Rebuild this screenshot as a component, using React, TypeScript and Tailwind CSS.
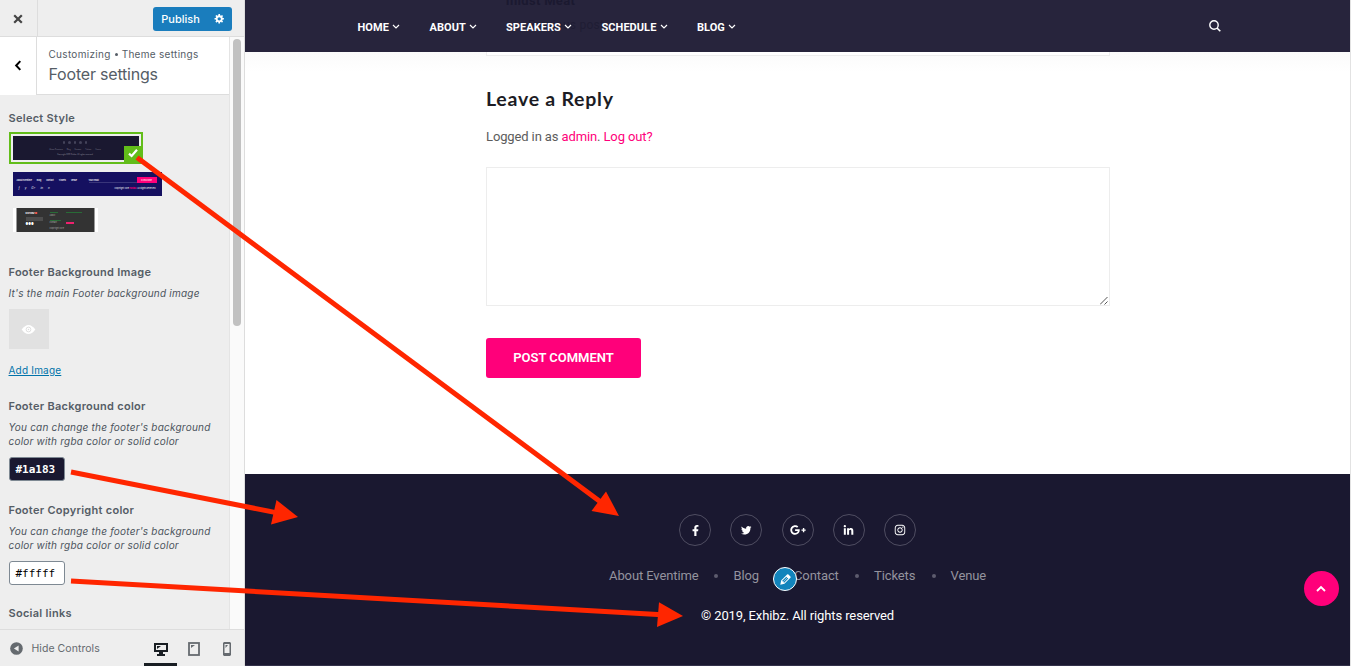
import React from "react";
import { FaFacebookF, FaTwitter, FaGooglePlusG, FaLinkedinIn, FaInstagram } from "react-icons/fa";

function Heading({ children, className = "" }: { children: React.ReactNode; className?: string }) {
  return (
    <h3 className={`h-5 text-[11px] leading-5 font-semibold tracking-[0.28px] whitespace-nowrap text-[#555d66] ${className}`}>
      {children}
    </h3>
  );
}

function Description({ children }: { children: React.ReactNode }) {
  return (
    <p className="mt-1 text-[10px] leading-[14px] tracking-[0.22px] whitespace-nowrap text-[#4b535c] italic">{children}</p>
  );
}

function StyleDark() {
  return (
    <div className="relative mt-1 flex h-8 w-[134px] border-2 border-[#62bd19] p-0.5">
      <div className="flex h-6 w-[126px] flex-col items-center bg-[#1a1830] pt-[5px] pr-[1px]">
        <div className="flex gap-[3px]">
          {[0, 1, 2, 3, 4].map((i) => (
            <span key={i} className="size-[2.5px] rounded-full bg-[#44435a]" />
          ))}
        </div>
        <div className="mt-[3px] flex h-[4px] items-center gap-[4px] text-[1.8px] leading-[4px] whitespace-nowrap text-[#77768a]">
          <span>About Eventime</span><span>Blog</span><span>Contact</span><span>Tickets</span><span>Venue</span>
        </div>
        <div className="mt-px text-[1.8px] leading-[4px] whitespace-nowrap text-[#8b8a99]">Copyright 2019 Exhibz. All rights reserved</div>
      </div>
      <div className="absolute -right-0.5 -bottom-px flex h-[17px] w-[19px] items-center justify-center bg-[#62bd19]">
        <svg viewBox="0 0 10 10" className="mt-[-3px] size-[10px]">
          <path d="M1 5.6 3.6 8 9 1.7" fill="none" stroke="#fff" strokeWidth="2.2" />
        </svg>
      </div>
    </div>
  );
}

function StyleNavy() {
  return (
    <div className="mt-2 ml-1 flex h-6 w-[149px] flex-col bg-[#151060] px-[4px] pt-[5px] text-[2px] leading-[6px] whitespace-nowrap text-white">
      <div className="flex h-[6px] items-center">
        <div className="flex w-[72px] gap-[5px] font-semibold"><span>About Eventime</span><span>Blog</span><span>Contact</span><span>Tickets</span><span>Venue</span></div>
        <div className="h-[6px] w-[48px] border-b border-[#39357a] font-semibold">Your Email</div>
        <div className="h-[6px] w-[20px] bg-[#ff007a] text-center">SUBSCRIBE</div>
      </div>
      <div className="mt-[2px] flex h-[6px] justify-between">
        <span className="flex gap-[5px] pl-0.5 text-[3px]"><i>f</i><i>y</i><i>G+</i><i>in</i><i>o</i></span>
        <span className="pr-0.5">Copyright 2019 <b className="text-[#ff007a]">Exhibz</b>. All Rights Reserved</span>
      </div>
    </div>
  );
}

function StyleGray() {
  return (
    <div className="mt-3 ml-1 flex h-6 w-[85px] bg-white px-[3px]">
      <div className="flex flex-1 gap-[6px] border-x border-[#999] bg-[#333] px-[9px] pt-[4px] text-[2px] leading-[3px] text-[#aaa]">
        <div className="w-[18px]">
          <div className="text-[2.5px] leading-[3px] font-bold text-white">EXHIBZ<span className="text-[#f75b56]">■</span></div>
          <div className="mt-[2px] h-[4px] w-[17px] bg-[#4d4d4d]" />
          <div className="mt-[2px] text-[3px] text-white">●●●</div>
        </div>
        <div className="w-[10px]">
          <div className="h-px w-[8px] bg-[#286b36]" />
          <div className="mt-px">About</div>
          <div className="mt-[3px] h-px w-[11px] bg-[#286b36]" />
          <div>Contact</div>
          <div className="mt-[3px] whitespace-nowrap">Copyright 2019</div>
        </div>
        <div>
          <div className="h-px w-[16px] bg-[#286b36]" />
          <div className="mt-[9px] h-[2px] w-[8px] bg-[#ef216e]" />
        </div>
      </div>
    </div>
  );
}

function Sidebar() {
  return (
    <aside className="flex h-full w-[245px] shrink-0 flex-col border-r border-[#ddd] bg-[#eee] font-['Inter','Liberation_Sans',sans-serif]">
      <div className="flex h-[37px] shrink-0 items-center border-b border-[#ddd]">
        <div className="flex h-full w-[38px] items-center justify-center border-r border-[#ddd] pr-px">
          <svg viewBox="0 0 10 10" className="mt-[2px] size-[10px]"><path d="M1.2 1.2 8.8 8.8M8.8 1.2 1.2 8.8" stroke="#444" strokeWidth="2.2" /></svg>
        </div>
        <div className="mt-px ml-[115px] flex h-6 w-[79px] items-center rounded-[3px] bg-[#1a7dbd] text-white">
          <span className="w-[55px] pt-px text-center text-[11px] font-medium">Publish</span>
          <svg viewBox="0 0 20 20" className="mb-px ml-[6px] size-[11px]" fill="currentColor">
            <path d="M18 12h-2.18c-.17.7-.44 1.35-.81 1.93l1.54 1.54-2.1 2.1-1.54-1.54c-.58.36-1.23.63-1.91.79V19H8v-2.18c-.68-.16-1.33-.43-1.91-.79l-1.54 1.54-2.12-2.12 1.54-1.54c-.36-.58-.63-1.23-.79-1.91H1V9.03h2.17c.16-.7.44-1.35.8-1.94L2.43 5.55l2.1-2.1 1.54 1.54c.58-.37 1.24-.64 1.93-.81V2h3v2.18c.68.16 1.33.43 1.91.79l1.54-1.54 2.12 2.12-1.54 1.54c.36.59.64 1.24.8 1.94H18V12zm-8.5 1.5c1.66 0 3-1.34 3-3s-1.34-3-3-3-3 1.34-3 3 1.34 3 3 3z" />
          </svg>
        </div>
      </div>
      <div className="flex h-[592px] shrink-0">
        <div className="w-[229px] overflow-hidden">
          <div className="flex h-[58px] border-b border-[#ddd] bg-white">
            <div className="-mb-px flex w-[37px] shrink-0 items-center justify-center border-r border-[#ddd] bg-white pr-px">
              <svg viewBox="0 0 8 12" className="mb-[2px] h-[11px] w-[8px]"><path d="M6.5 1.2 2 6l4.5 4.8" fill="none" stroke="#000" strokeWidth="2.2" /></svg>
            </div>
            <div className="pt-[9px] pl-[11.500px] whitespace-nowrap text-[#555d66]">
              <div className="flex h-4 items-center text-[10px] leading-4 tracking-[0.3px]">
                Customizing<span className="mx-[4px] size-[3px] rounded-full bg-[#555d66]" />Theme settings
              </div>
              <div className="text-[16px] leading-6 tracking-[-0.2px]">Footer settings</div>
            </div>
          </div>
          <div className="pt-[13px] pl-[8.500px]">
            <Heading>Select Style</Heading>
            <StyleDark />
            <StyleNavy />
            <StyleGray />
            <Heading className="mt-[30px]">Footer Background Image</Heading>
            <Description>It's the main Footer background image</Description>
            <div className="mt-[9px] flex size-10 items-center justify-center bg-[#e1e1e1]">
              <svg viewBox="0 0 16 12" className="h-[11px] w-[15px]">
                <path d="M.5 6Q8-4 15.500 6 8 16 .5 6Z" fill="#fff" />
                <circle cx="8" cy="6" r="2.6" fill="#fff" stroke="#ddd" strokeWidth="1" /><circle cx="8" cy="6" r=".8" fill="#ddd" />
              </svg>
            </div>
            <a className="mt-[11px] block h-5 w-fit text-[10px] leading-5 tracking-[0.2px] text-[#0073aa] underline">Add Image</a>
            <Heading className="mt-[16px]">Footer Background color</Heading>
            <Description>You can change the footer's background<br />color with rgba color or solid color</Description>
            <div className="mt-[9px] h-6 w-14 rounded-[3px] border border-[#7e8993] bg-[#1a1830] pl-[6px] font-['DejaVu_Sans_Mono',monospace] text-[11px] leading-[23px] font-bold text-white">#1a183</div>
            <Heading className="mt-[19px]">Footer Copyright color</Heading>
            <Description>You can change the footer's background<br />color with rgba color or solid color</Description>
            <div className="mt-[9px] h-6 w-14 rounded-[3px] border border-[#7e8993] bg-white pl-[6px] font-['DejaVu_Sans_Mono',monospace] text-[11px] leading-[23px] text-black">#fffff</div>
            <Heading className="mt-[18px]">Social links</Heading>
          </div>
        </div>
        <div className="w-[15px] border-l border-[#e4e4e4] bg-[#fafafa] pt-[2px] pl-[3px]">
          <div className="h-[287px] w-2 rounded-full bg-[#c1c1c1]" />
        </div>
      </div>
      <div className="flex h-[37px] shrink-0 border-t border-[#ddd] text-[#656a6f]">
        <div className="flex h-[37px] w-[144px] items-center pl-[10px]">
          <svg viewBox="0 0 14 14" className="size-[13px]"><circle cx="7" cy="7" r="6.8" fill="#656a6f" /><path d="M9.3 3.8v6.4L4.2 7Z" fill="#eee" /></svg>
          <span className="ml-[8.500px] text-[10.5px] tracking-[0.05px] text-[#656a6f]">Hide Controls</span>
        </div>
        <div className="flex h-[36px] w-[33px] items-center justify-center border-b-[3px] border-[#191e23] pt-1">
          <svg viewBox="0 0 14 14" className="size-[14px]"><path fillRule="evenodd" d="M0 1h14v9H9v2h2v2H3v-2h2v-2H0ZM2 3v5h10V3Z" fill="#191e23" /><path d="M3 4h4L3 7Z" fill="#191e23" /></svg>
        </div>
        <div className="flex w-[34px] items-center justify-center pt-[1px]">
          <svg viewBox="0 0 12 14" className="h-[14px] w-[12px]"><rect x="1" y="1" width="10" height="12" fill="none" stroke="#656a6f" strokeWidth="1.8" /><path d="M3 3h4L3 6Z" fill="#656a6f" /></svg>
        </div>
        <div className="flex w-[32px] items-center justify-center pt-[1px]">
          <svg viewBox="0 0 8 14" className="h-[14px] w-[8px]"><path fillRule="evenodd" d="M0 1 1 0h6l1 1v12l-1 1H1l-1-1ZM1.500 2v9h5V2Z" fill="#656a6f" /><path d="M2.500 3H5L2.500 6Z" fill="#656a6f" /></svg>
        </div>
      </div>
    </aside>
  );
}

function NavItem({ label, className }: { label: string; className: string }) {
  return (
    <div className={`flex items-center text-[11px] leading-4 font-bold tracking-[0.05px] whitespace-nowrap text-white ${className}`}>
      {label}
      <svg viewBox="0 0 8 6" className="mb-[3px] ml-[3.500px] h-[6px] w-[8px]"><path d="M1 1l3 3 3-3" fill="none" stroke="#fff" strokeWidth="1.2" /></svg>
    </div>
  );
}

function Social({ children }: { children: React.ReactNode }) {
  return <div className="flex size-8 items-center justify-center rounded-full border border-[#4f4d61] text-white">{children}</div>;
}

function Dot({ className }: { className: string }) {
  return <span className={`size-1 rounded-full bg-[#5d5c6e] ${className}`} />;
}

function Preview() {
  return (
    <main className="flex h-full w-[1106px] flex-col border-r border-[#e2e2e2] bg-white font-['Roboto','Liberation_Sans',sans-serif]">
      <header className="relative flex h-[52px] shrink-0 items-center bg-[#27243c] pt-0.5 pl-[112.500px]">
        <div className="absolute -top-[7px] left-[261px] text-[13px] leading-4 font-bold tracking-[0.3px] text-[#1b1930]">midst Meat</div>
        <div className="absolute top-[17px] left-[283px] text-[12px] leading-4 tracking-[0.25px] text-[#1f1d34]">Previous post</div>
        <div className="relative flex pt-[2px]">
          <NavItem label="HOME" className="w-[72px]" />
          <NavItem label="ABOUT" className="w-[76.500px]" />
          <NavItem label="SPEAKERS" className="w-[95.500px]" />
          <NavItem label="SCHEDULE" className="w-[95.500px]" />
          <NavItem label="BLOG" className="w-[60px]" />
        </div>
        <svg viewBox="0 0 12 12" className="mb-[3px] ml-[452px] size-3"><circle cx="5" cy="5" r="4.200" fill="none" stroke="#fff" strokeWidth="1.4" /><path d="m8 8 3.300 3.300" stroke="#fff" strokeWidth="1.600" /></svg>
      </header>
      <div className="h-[422px] shrink-0 bg-linear-to-b from-[#fbfbfb] to-white to-[20px] pl-[241px]">
        <div className="h-1 w-[624px] border-x border-b border-[#eee] bg-white" />
        <h2 className="mt-[31px] h-6 font-['Lato','Open_Sans',sans-serif] text-[19.500px] leading-6 font-bold tracking-[0.75px] whitespace-nowrap text-[#1c1c24]">Leave a Reply</h2>
        <p className="mt-[16px] h-5 text-[13px] leading-5 tracking-[-0.12px] whitespace-nowrap text-[#5c5c5c]">
          Logged in as <span className="text-[#ff007a]">admin</span>. <span className="text-[#ff007a]">Log out?</span>
        </p>
        <div className="mt-[20px] flex h-[139px] w-[624px] items-end justify-end border border-[#ededed]">
          <svg viewBox="0 0 8 8" className="mr-px size-2"><path d="M0 7.500 7.500 0M4.500 7.500 7.500 4.500" stroke="#555" strokeWidth="1" /></svg>
        </div>
        <button className="mt-8 flex h-10 w-[155px] items-center justify-center rounded-[3px] bg-[#ff007a] text-[13px] font-semibold text-white">POST COMMENT</button>
      </div>
      <footer className="flex h-[192px] shrink-0 flex-col border-b border-[#33314a] bg-[#1a1830]">
        <div className="mt-10 flex h-8 gap-[19.25px] pl-[434px]">
          <Social><FaFacebookF size={11} /></Social>
          <Social><FaTwitter size={10.5} /></Social>
          <Social><FaGooglePlusG size={16} /></Social>
          <Social><FaLinkedinIn size={11} /></Social>
          <Social><FaInstagram size={12} /></Social>
        </div>
        <div className="relative mt-5 flex h-5 items-center pl-[364px] text-[13px] leading-5 tracking-[-0.1px] whitespace-nowrap text-[#94939e]">
          <span className="w-[90px]">About Eventime</span><Dot className="ml-[15px]" />
          <span className="ml-[15.500px] w-[26px]">Blog</span>
          <span className="ml-[34.500px] w-[45px]">Contact</span><Dot className="ml-[16px]" />
          <span className="ml-[15px] w-[41px]">Tickets</span><Dot className="ml-[17px]" />
          <span className="ml-[14.500px]">Venue</span>
          <div className="absolute top-px left-[528px] flex size-6 items-center justify-center rounded-full border border-white bg-[#1284bc]">
            <svg viewBox="0 0 20 20" className="size-[15px]" fill="#fff"><path d="M13.89 3.39l2.71 2.72c.46.46.42 1.24.03 1.64l-8.01 8.02-5.56 1.16 1.16-5.58s7.6-7.63 7.99-8.03c.39-.39 1.22-.39 1.68.07zm-2.73 2.79l-5.59 5.61 1.11 1.11 5.54-5.65zm-2.97 8.23l5.58-5.6-1.07-1.08-5.59 5.6z" /></svg>
          </div>
        </div>
        <p className="mt-5 h-5 pl-[456px] text-[13px] leading-5 tracking-[-0.11px] text-white">© 2019, Exhibz. All rights reserved</p>
      </footer>
    </main>
  );
}

export default function App() {
  return (
    <div className="relative flex h-[666px] w-[1352px] overflow-hidden bg-white">
      <Sidebar />
      <Preview />
      <button className="absolute top-[571px] left-[1304px] flex size-[35px] items-center justify-center rounded-full bg-[#ff007a]">
        <svg viewBox="0 0 10 7" className="mr-px h-[7px] w-[10px]"><path d="m1 6 4-4 4 4" fill="none" stroke="#fff" strokeWidth="1.9" /></svg>
      </button>
      <svg viewBox="0 0 1352 666" className="pointer-events-none absolute inset-0 h-[666px] w-[1352px]" fill="#ff2600" stroke="#ff2600">
        <g strokeWidth="5">
          <path d="M137 157.500 602 503" />
          <path d="M71 472 276 512.600" />
          <path d="M71 581 662 614.800" />
        </g>
        <g stroke="none">
          <path d="m619 516-13-24.500-14.500 19.500Z" />
          <path d="m298 517-21.500-17-5.500 24.500Z" />
          <path d="m683 616-24-13.700-2 24.700Z" />
        </g>
      </svg>
    </div>
  );
}
